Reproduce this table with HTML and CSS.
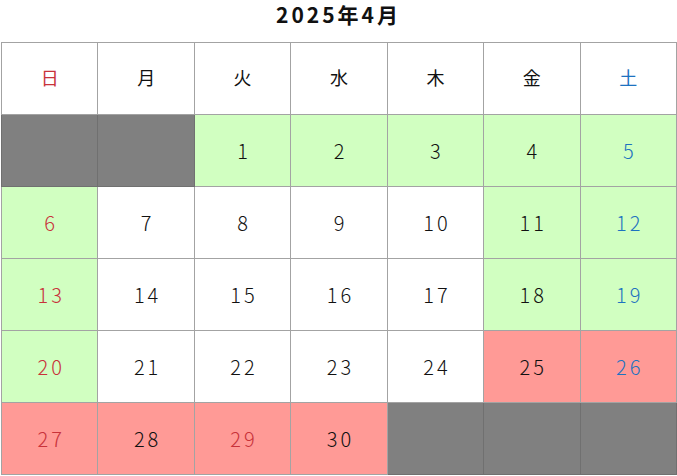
FILE: index.html
```html
<!DOCTYPE html>
<html lang="ja">
<head>
<meta charset="utf-8">
<link rel="stylesheet" href="styles.css">
</head>
<body>
<h1 class="title">2025年4月</h1>
<table class="cal">
<thead>
<tr><th class="sun">日</th><th>月</th><th>火</th><th>水</th><th>木</th><th>金</th><th class="sat">土</th></tr>
</thead>
<tbody>
<tr><td class="off"></td><td class="off"></td><td class="ok">1</td><td class="ok">2</td><td class="ok">3</td><td class="ok">4</td><td class="ok sat">5</td></tr>
<tr><td class="ok sun">6</td><td>7</td><td>8</td><td>9</td><td>10</td><td class="ok">11</td><td class="ok sat">12</td></tr>
<tr><td class="ok sun">13</td><td>14</td><td>15</td><td>16</td><td>17</td><td class="ok">18</td><td class="ok sat">19</td></tr>
<tr><td class="ok sun">20</td><td>21</td><td>22</td><td>23</td><td>24</td><td class="full">25</td><td class="full sat">26</td></tr>
<tr><td class="full sun">27</td><td class="full">28</td><td class="full sun">29</td><td class="full">30</td><td class="off"></td><td class="off"></td><td class="off"></td></tr>
</tbody>
</table>
</body>
</html>
```
FILE: styles.css
```css
html, body { margin: 0; padding: 0; background: #fff; }
body { font-family: "Noto Sans CJK JP", "Noto Sans", sans-serif; color: #111; }
.title {
  margin: 0;
  height: 42px;
  box-sizing: border-box;
  padding-top: 1px;
  line-height: 26px;
  text-align: center;
  font-size: 21px;
  font-weight: bold;
  letter-spacing: 3px;
}
.cal {
  margin-left: 1px;
  width: 676px;
  border-collapse: collapse;
  table-layout: fixed;
}
.cal th, .cal td {
  border: 1px solid #a3a3a3;
  height: 71px;
  padding: 0;
  text-align: center;
  vertical-align: middle;
  font-size: 20px;
  font-weight: 300;
  letter-spacing: 3px;
  text-indent: 3px;
  line-height: 20px;
}
.cal th {
  font-size: 18px;
  font-weight: 400;
  height: 68px;
  padding-bottom: 3px;
  letter-spacing: 0;
  text-indent: 0;
}
.cal .sun { color: #c8323a; }
.cal .sat { color: #1d72c0; }
.cal .ok { background: #d1ffc1; }
.cal .full { background: #ff9a96; }
.cal .off { background: #808080; border-color: #707070; }
```
